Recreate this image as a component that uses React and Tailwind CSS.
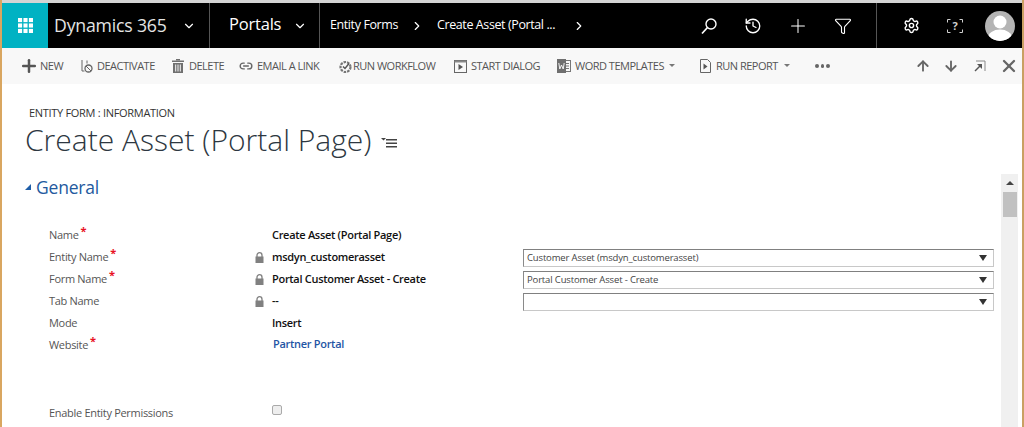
import React from 'react';
import { History, Plus, Funnel, Settings, ChevronDown, ChevronRight, ArrowUp, ArrowDown, X, Link2 } from 'lucide-react';

const Waffle = () => (
  <svg width="15" height="15" viewBox="0 0 16 16" fill="#ffffff">
    <rect x="0" y="0" width="4.400" height="4.400" /><rect x="5.800" y="0" width="4.400" height="4.400" /><rect x="11.600" y="0" width="4.400" height="4.400" />
    <rect x="0" y="5.800" width="4.400" height="4.400" /><rect x="5.800" y="5.800" width="4.400" height="4.400" /><rect x="11.600" y="5.800" width="4.400" height="4.400" />
    <rect x="0" y="11.600" width="4.400" height="4.400" /><rect x="5.800" y="11.600" width="4.400" height="4.400" /><rect x="11.600" y="11.600" width="4.400" height="4.400" />
  </svg>
);

const SearchIcon = () => (
  <svg width="18" height="18" viewBox="0 0 18 18" fill="none" stroke="#ffffff">
    <circle cx="11" cy="7" r="5" strokeWidth="1.400" />
    <path d="M7.500 10.500L2 16.500" strokeWidth="1.700" />
  </svg>
);

const HelpIcon = () => (
  <svg width="16" height="14" viewBox="0 0 16 14" fill="none" stroke="#d0d0d0">
    <path d="M0.500 3.500v-3h3M12.500 0.500h3v3M15.500 10.500v3h-3M3.500 13.500h-3v-3" />
    <text x="8" y="11" textAnchor="middle" fontSize="11" fontWeight="700" fill="#d0d0d0" stroke="none">?</text>
  </svg>
);

const Avatar = () => (
  <svg width="30" height="30" viewBox="0 0 30 30">
    <defs><clipPath id="av"><circle cx="15" cy="15" r="15" /></clipPath></defs>
    <g clipPath="url(#av)">
      <rect width="30" height="30" fill="#b4b4b4" />
      <circle cx="15" cy="11" r="6.500" fill="#ffffff" />
      <ellipse cx="15" cy="27" rx="12" ry="8.500" fill="#ffffff" />
    </g>
  </svg>
);

const DeactivateIcon = () => (
  <svg width="12" height="15" viewBox="0 0 12 15" fill="none" stroke="#666" strokeWidth="1">
    <path d="M1 1v11h2.500" />
    <path d="M6 4.500V1.500" />
    <circle cx="7.500" cy="9.500" r="3.500" strokeWidth="1.300" />
    <path d="M5 7l5 5" />
  </svg>
);

const TrashIcon = () => (
  <svg width="12" height="14" viewBox="0 0 12 14" fill="#707070">
    <rect x="0" y="1.500" width="12" height="1.500" />
    <rect x="4" y="0" width="4" height="1.500" />
    <path d="M1 4h10v10H1z" />
    <path d="M3.200 5.500h1v7h-1zM5.500 5.500h1v7h-1zM7.800 5.500h1v7h-1z" fill="#f8f8f8" />
  </svg>
);

const WorkflowIcon = () => (
  <svg width="13" height="15" viewBox="0 0 13 15" fill="none">
    <circle cx="6.500" cy="8" r="5" stroke="#777" strokeWidth="2.200" strokeDasharray="2.500 1" />
    <path d="M4 7.500l2 2 4-5" stroke="#555" strokeWidth="1.500" />
  </svg>
);

const PlayBoxIcon = () => (
  <svg width="13" height="13" viewBox="0 0 13 13" fill="none">
    <rect x="0.500" y="0.500" width="12" height="12" stroke="#666" />
    <rect x="0.500" y="0.500" width="12" height="2" fill="#888" />
    <path d="M4.500 4v6l4.500-3z" fill="#555" />
  </svg>
);

const WordIcon = () => (
  <svg width="14" height="14" viewBox="0 0 14 14">
    <rect x="6.500" y="1.500" width="7" height="11" fill="none" stroke="#777" />
    <path d="M9 4.500h3M9 7h3M9 9.500h3" stroke="#777" />
    <rect x="0" y="0" width="9" height="14" fill="#6f6f6f" />
    <path d="M1.800 4l1 6 1.700-4 1.700 4 1-6" fill="none" stroke="#fff" strokeWidth="0.900" />
  </svg>
);

const ReportIcon = () => (
  <svg width="11" height="14" viewBox="0 0 11 14" fill="none">
    <path d="M0.500 0.500h7l3 3v10h-10z" stroke="#666" />
    <path d="M3.500 4.500v6l4-3z" fill="#555" />
  </svg>
);

const ExpandIcon = () => (
  <svg width="12" height="12" viewBox="0 0 12 12" fill="none">
    <path d="M2 1h9v10" stroke="#888" />
    <path d="M1 11l6-6" stroke="#555" strokeWidth="1.500" />
    <path d="M3 4h5v5z" fill="#555" />
  </svg>
);

const LockIcon = () => (
  <svg width="9" height="11" viewBox="0 0 9 11" fill="none">
    <path d="M2 5V3.200a2.500 2.500 0 0 1 5 0V5" stroke="#808080" strokeWidth="1.300" />
    <rect x="0.500" y="4.500" width="8" height="6.500" fill="#808080" />
  </svg>
);

const Caret = ({ className }) => <span className={`mt-[-2px] h-0 w-0 shrink-0 border-x-[3px] border-t-[3px] border-x-transparent border-t-[#777] ${className}`} />;

const CommandButton = ({ icon, label, className, textClass }) => (
  <div className={`flex shrink-0 items-center ${className}`}>
    {icon}
    <span className={`${textClass} whitespace-nowrap text-[11px] tracking-[-0.5px] text-[#555]`}>{label}</span>
  </div>
);

const Required = () => <span className="ml-[2px] mt-[-9px] text-[11px] font-bold leading-none text-[#e81123]">*</span>;

const FormRow = ({ label, required, locked, value, link, select }) => (
  <div className="flex h-[22px] items-center">
    <div className="flex w-[206px] items-center text-[11px] tracking-[-0.3px] text-[#555]">
      {label}
      {required && <Required />}
    </div>
    <div className="flex w-[17px] items-center">
      {locked && <LockIcon />}
    </div>
    <div className={`w-[251px] text-[11px] font-semibold tracking-[-0.3px] ${link ? 'text-[#1f56a5] ml-[1px] mt-[-2px]' : 'text-[#111]'}`}>{value}</div>
    {select !== undefined && (
      <div className="mt-[2px] flex h-[18px] w-[471px] items-center justify-between border border-[#c8c8c8] border-l-[#8a8a8a] border-t-[#808080] px-[3px]">
        <span className="text-[9.500px] tracking-[-0.15px] text-[#444]">{select}</span>
        <span className="mr-[3px] h-0 w-0 border-x-[4px] border-t-[6px] border-x-transparent border-t-[#333]" />
      </div>
    )}
  </div>
);

export default function App() {
  return (
    <div className="flex h-[427px] w-[1024px] overflow-hidden bg-white font-['Open_Sans',sans-serif]">
      <div className="w-[2px] shrink-0 bg-[#d9a660]" />

      <div className="flex w-[1020px] flex-col">
        <div className="h-[3px] bg-[#d4d4d4]" />

        {/* Nav bar */}
        <div className="flex h-[45px] items-center whitespace-nowrap bg-black text-white">
          <div className="flex h-full w-[46px] shrink-0 items-center justify-center bg-[#00b2c3]">
            <Waffle />
          </div>
          <span className="ml-[6px] w-[128px] text-[17.700px] tracking-[-0.2px] text-[#e4e4e4]">Dynamics 365</span>
          <ChevronDown size={14} strokeWidth={2} />
          <div className="ml-[13px] h-full w-px bg-[#555]" />
          <span className="ml-[19px] mt-[-2px] w-[64px] text-[16.500px] tracking-[-0.2px]">Portals</span>
          <ChevronDown size={14} strokeWidth={2} />
          <div className="ml-[12px] h-full w-px bg-[#555]" />
          <span className="ml-[10px] w-[68px] text-[12.500px] tracking-[-0.4px]">Entity Forms</span>
          <ChevronRight className="ml-[12px]" size={14} strokeWidth={2} />
          <span className="ml-[13px] w-[135px] text-[12.500px] tracking-[-0.4px]">Create Asset (Portal ...</span>
          <ChevronRight size={14} strokeWidth={2} />
          <div className="ml-[114px]"><SearchIcon /></div>
          <History className="ml-[26px]" size={18} strokeWidth={1.800} />
          <Plus className="ml-[25px]" size={22} strokeWidth={1.100} />
          <Funnel className="ml-[25px]" size={18} strokeWidth={1.500} />
          <div className="ml-[24px] h-full w-px bg-[#555]" />
          <Settings className="ml-[26px]" size={17} strokeWidth={2} />
          <div className="ml-[27px]"><HelpIcon /></div>
          <div className="ml-[22px]"><Avatar /></div>
        </div>

        {/* Command bar */}
        <div className="flex h-[36px] items-center bg-[#f8f8f8]">
          <CommandButton className="ml-[17px]" textClass="ml-[1px] w-[23px]" icon={<Plus size={20} strokeWidth={3} color="#555" />} label="NEW" />
          <CommandButton className="ml-[18px]" textClass="ml-[4px] w-[58px]" icon={<DeactivateIcon />} label="DEACTIVATE" />
          <CommandButton className="ml-[17px]" textClass="ml-[5px] w-[34px]" icon={<TrashIcon />} label="DELETE" />
          <CommandButton className="ml-[16px]" textClass="ml-[4px] w-[65px]" icon={<Link2 size={14} strokeWidth={2.400} color="#666" />} label="EMAIL A LINK" />
          <CommandButton className="ml-[17px]" textClass="ml-[1px] w-[84px]" icon={<WorkflowIcon />} label="RUN WORKFLOW" />
          <CommandButton className="ml-[17px]" textClass="ml-[4px] w-[69px]" icon={<PlayBoxIcon />} label="START DIALOG" />
          <CommandButton className="ml-[17px]" textClass="ml-[4px] w-[89px]" icon={<WordIcon />} label="WORD TEMPLATES" />
          <Caret className="ml-[5px]" />
          <CommandButton className="ml-[25px]" textClass="ml-[5px] w-[62px]" icon={<ReportIcon />} label="RUN REPORT" />
          <Caret className="ml-[6px]" />
          <div className="ml-[25px] flex gap-[2px]">
            <span className="h-[3.500px] w-[3.500px] rounded-full bg-[#666]" />
            <span className="h-[3.500px] w-[3.500px] rounded-full bg-[#666]" />
            <span className="h-[3.500px] w-[3.500px] rounded-full bg-[#666]" />
          </div>
          <ArrowUp className="ml-[85px] shrink-0" size={16} strokeWidth={2.800} color="#666" />
          <ArrowDown className="ml-[12px] shrink-0" size={16} strokeWidth={2.800} color="#666" />
          <div className="ml-[15px] shrink-0"><ExpandIcon /></div>
          <X className="ml-[13px] shrink-0" size={20} strokeWidth={2.800} color="#666" />
        </div>

        {/* Page header */}
        <div className="h-[90px] pl-[23px] pt-[22px]">
          <div className="ml-[4px] text-[11px] leading-[14px] tracking-[-0.3px] text-[#333]">ENTITY FORM : INFORMATION</div>
          <div className="flex items-center">
            <span className="text-[30px] font-light leading-[40px] text-[#2d3741]">Create Asset (Portal Page)</span>
            <svg className="ml-[10px] mt-[6px]" width="16" height="10" viewBox="0 0 16 10" fill="#444">
              <path d="M0 0h5L2.500 2.500z" />
              <rect x="5" y="1" width="11" height="1.500" /><rect x="5" y="4.500" width="11" height="1.500" /><rect x="5" y="8" width="11" height="1.500" />
            </svg>
          </div>
        </div>

        {/* Form body */}
        <div className="flex min-h-0 flex-1">
          <div className="w-[999px] shrink-0 pl-[23px]">
            <div className="flex h-[26px] items-center">
              <span className="h-0 w-0 border-b-[6px] border-l-[6px] border-b-[#1f5ea8] border-l-transparent" />
              <span className="ml-[5px] text-[17.500px] tracking-[-0.2px] text-[#23599e]">General</span>
            </div>
            <div className="ml-[24px] mt-[24px]">
              <FormRow label="Name" required value="Create Asset (Portal Page)" />
              <FormRow label="Entity Name" required locked value="msdyn_customerasset" select="Customer Asset (msdyn_customerasset)" />
              <FormRow label="Form Name" required locked value="Portal Customer Asset - Create" select="Portal Customer Asset - Create" />
              <FormRow label="Tab Name" locked value="--" select="" />
              <FormRow label="Mode" value="Insert" />
              <FormRow label="Website" required link value="Partner Portal" />
              <div className="mt-[46px] flex h-[22px] items-center">
                <div className="w-[223px] text-[11px] tracking-[-0.3px] text-[#555]">Enable Entity Permissions</div>
                <span className="mt-[-6px] h-[10px] w-[10px] rounded-[2px] border border-[#aaa] bg-[#eeeeee]" />
              </div>
            </div>
          </div>

          {/* Scrollbar */}
          <div className="flex w-[17px] shrink-0 flex-col items-center bg-[#f0f0f0]">
            <div className="flex h-[18px] w-full items-center justify-center">
              <span className="h-0 w-0 border-x-[4px] border-b-[4px] border-x-transparent border-b-[#444]" />
            </div>
            <div className="h-[25px] w-[14px] bg-[#c1c1c1]" />
          </div>
        </div>
      </div>

      <div className="w-[2px] shrink-0 bg-[#c9a063]" />
    </div>
  );
}
